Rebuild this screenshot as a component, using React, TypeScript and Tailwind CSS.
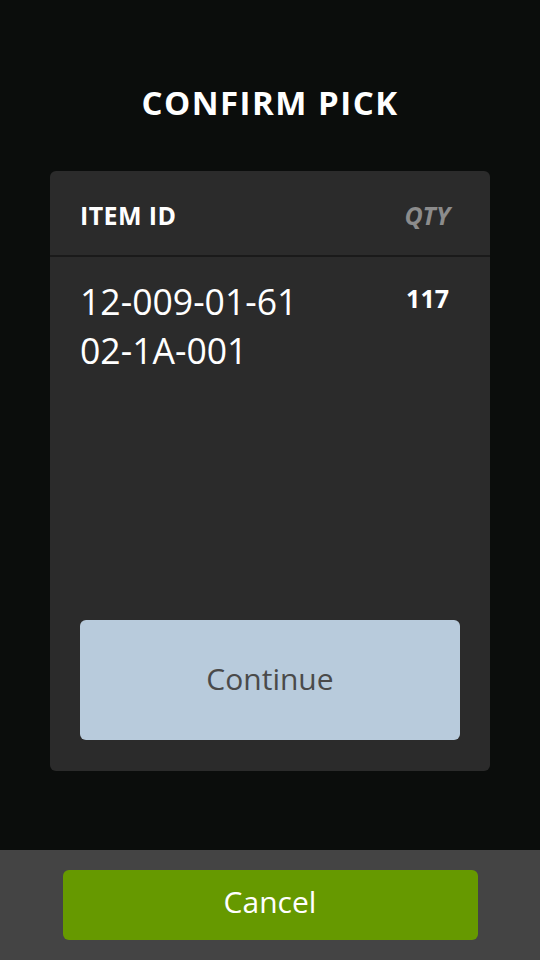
export default function App() {
  return (
    <div
      className="w-[540px] h-[960px] bg-[#0b0d0c] flex flex-col"
      style={{ fontFamily: '"Open Sans", sans-serif' }}
    >
      <div className="flex-1 flex flex-col items-center">
        <h1 className="mt-[80px] text-[33px] leading-[46px] font-bold text-white tracking-[1.5px]">
          CONFIRM PICK
        </h1>
        <div className="mt-[45px] w-[440px] h-[600px] bg-[#2b2b2b] rounded-[6px] flex flex-col">
          <div className="h-[86px] px-[30px] pt-[5px] flex items-center justify-between border-b-2 border-[#1a1a1a]">
            <span className="text-[25px] font-bold text-white tracking-[0.4px]">ITEM ID</span>
            <span className="text-[25px] font-bold italic text-[#8c8c8c] mr-[10px]">QTY</span>
          </div>
          <div className="flex-1 px-[30px] pt-[20px] flex justify-between">
            <div className="text-[35.6px] leading-[48.5px] text-white">
              <div>12-009-01-61</div>
              <div>02-1A-001</div>
            </div>
            <div className="text-[25px] leading-[34px] font-bold text-white mr-[11px] pt-[4px]">117</div>
          </div>
          <div className="px-[30px] pb-[31px]">
            <button className="w-full h-[120px] rounded-[6px] bg-[#b8cbdc] text-[#4a4a4a] text-[30px] pb-[4px]">
              Continue
            </button>
          </div>
        </div>
      </div>
      <div className="h-[110px] bg-[#444444] flex items-center justify-center">
        <button className="w-[415px] h-[70px] rounded-[6px] bg-[#669900] text-white text-[30px] pb-[8px]">
          Cancel
        </button>
      </div>
    </div>
  );
}
